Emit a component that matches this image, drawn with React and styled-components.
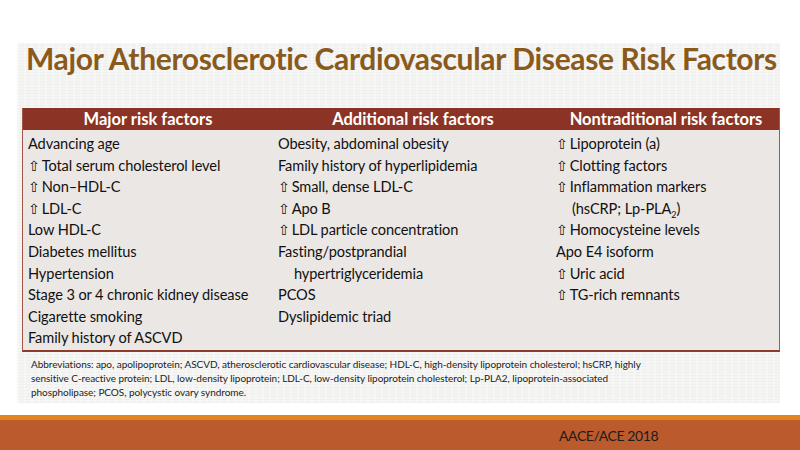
import React from "react";
import styled, { createGlobalStyle } from "styled-components";

const GlobalStyle = createGlobalStyle`
    html, body {
        margin: 0;
        padding: 0;
        background: #ffffff;
    }
    body {
        font-family: Lato, "Open Sans", "DejaVu Sans", sans-serif;
    }
`;

const Slide = styled.div`
    width: 800px;
    height: 450px;
    display: flex;
    flex-direction: column;
    background: #ffffff;
    overflow: hidden;
`;

const Panel = styled.div`
    margin: 43px 20px 0 17px;
    height: 360px;
    flex-shrink: 0;
    display: flex;
    flex-direction: column;
    background-color: #f4f4f3;
    background-image:
        repeating-linear-gradient(0deg, rgba(0,0,0,0.018) 0px, rgba(0,0,0,0.018) 1px, transparent 1px, transparent 3px),
        repeating-linear-gradient(90deg, rgba(255,255,255,0.35) 0px, rgba(255,255,255,0.35) 2px, transparent 2px, transparent 7px);
`;

const Title = styled.h1`
    margin: 0;
    padding: 0 0 0 9px;
    height: 65px;
    flex-shrink: 0;
    font-family: Lato, "Open Sans", sans-serif;
    font-weight: 700;
    font-size: 30px;
    letter-spacing: -0.35px;
    line-height: 30px;
    color: #8a5a1c;
    white-space: nowrap;
`;

const Table = styled.div`
    margin-left: 5px;
    flex-shrink: 0;
    display: grid;
    grid-template-columns: 250px 280px 1fr;
    background: #ebe7e5;
    border-left: 1px solid #a4574a;
    border-right: 1px solid #a4574a;
    border-bottom: 2px solid #8f3b2c;
`;

const HeadCell = styled.div`
    height: 22px;
    background: #8b3426;
    color: #ffffff;
    font-weight: 700;
    font-size: 16.5px;
    line-height: 22px;
    text-align: center;
`;

const Column = styled.div`
    display: flex;
    flex-direction: column;
    padding: 3px 0 1px ${p => p.pad}px;
`;

const Line = styled.div`
    height: 21.6px;
    line-height: 21.6px;
    font-size: 14.6px;
    color: #111111;
    white-space: nowrap;
    padding-left: ${p => (p.indent ? 16 : 0)}px;
    letter-spacing: -0.1px;
`;

const Up = styled.span`
    font-family: "DejaVu Sans", sans-serif;
    font-size: 14px;
    margin-right: 2px;
`;

const Note = styled.p`
    margin: 5px 0 0 14px;
    font-family: Lato, sans-serif;
    font-size: 10px;
    line-height: 14px;
    color: #222222;
    width: 650px;
    letter-spacing: -0.05px;
`;

const Footer = styled.div`
    margin-top: 12px;
    flex: 1;
    background: #bb5a2c;
    border-top: 5px solid #e3841c;
    display: flex;
    align-items: center;
    padding-left: 559px;
    font-size: 14px;
    letter-spacing: -0.4px;
    color: #1c1c1c;
`;

const major = [
    ["Advancing age"],
    ["Total serum cholesterol level", true],
    ["Non–HDL-C", true],
    ["LDL-C", true],
    ["Low HDL-C"],
    ["Diabetes mellitus"],
    ["Hypertension"],
    ["Stage 3 or 4 chronic kidney disease"],
    ["Cigarette smoking"],
    ["Family history of ASCVD"],
];

const additional = [
    ["Obesity, abdominal obesity"],
    ["Family history of hyperlipidemia"],
    ["Small, dense LDL-C", true],
    ["Apo B", true],
    ["LDL particle concentration", true],
    ["Fasting/postprandial"],
    ["hypertriglyceridemia", false, true],
    ["PCOS"],
    ["Dyslipidemic triad"],
];

const nontraditional = [
    ["Lipoprotein (a)", true],
    ["Clotting factors", true],
    ["Inflammation markers", true],
    [<>(hsCRP; Lp-PLA<sub style={{ fontSize: "9px" }}>2</sub>)</>, false, true],
    ["Homocysteine levels", true],
    ["Apo E4 isoform"],
    ["Uric acid", true],
    ["TG-rich remnants", true],
];

const renderLines = items =>
    items.map(([text, arrow, indent], i) => (
        <Line key={i} indent={indent}>
            {arrow && <Up>⇧</Up>}
            {text}
        </Line>
    ));

const App = () => {
    return (
        <Slide>
            <GlobalStyle />
            <Panel>
                <Title>Major Atherosclerotic Cardiovascular Disease Risk Factors</Title>
                <Table>
                    <HeadCell>Major risk factors</HeadCell>
                    <HeadCell>Additional risk factors</HeadCell>
                    <HeadCell>Nontraditional risk factors</HeadCell>
                    <Column pad={5}>{renderLines(major)}</Column>
                    <Column pad={5}>{renderLines(additional)}</Column>
                    <Column pad={3}>{renderLines(nontraditional)}</Column>
                </Table>
                <Note>
                    Abbreviations: apo, apolipoprotein; ASCVD, atherosclerotic cardiovascular disease; HDL-C, high-density lipoprotein cholesterol; hsCRP, highly
                    <br />
                    sensitive C-reactive protein; LDL, low-density lipoprotein; LDL-C, low-density lipoprotein cholesterol; Lp-PLA2, lipoprotein-associated
                    <br />
                    phospholipase; PCOS, polycystic ovary syndrome.
                </Note>
            </Panel>
            <Footer>AACE/ACE 2018</Footer>
        </Slide>
    );
};

export default App;
